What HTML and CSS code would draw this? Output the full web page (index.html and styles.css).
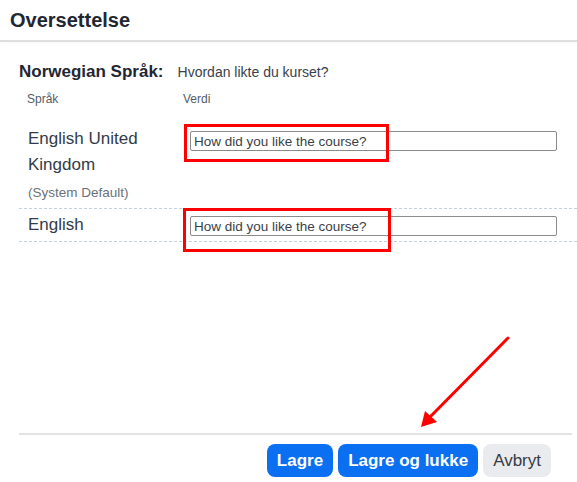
FILE: index.html
```html
<!DOCTYPE html>
<html lang="no">
<head>
<meta charset="utf-8">
<title>Oversettelse</title>
<link rel="stylesheet" href="styles.css">
</head>
<body>
  <header class="dialog-header">Oversettelse</header>

  <main class="dialog-body">
    <div class="lang-title">
      <span class="lang-name">Norwegian Språk:</span>
      <span class="lang-source">Hvordan likte du kurset?</span>
    </div>

    <div class="trans-table">
      <div class="trans-head">
        <span class="col-lang">Språk</span>
        <span class="col-value">Verdi</span>
      </div>

      <div class="trans-row">
        <div class="col-lang">
          <div class="lang-label">English United Kingdom</div>
          <div class="lang-note">(System Default)</div>
        </div>
        <div class="col-value">
          <div class="field">
            <input class="text-input" type="text" value="How did you like the course?">
            <span class="mark mark-first"></span>
          </div>
        </div>
      </div>

      <div class="trans-row">
        <div class="col-lang">
          <div class="lang-label">English</div>
        </div>
        <div class="col-value">
          <div class="field">
            <input class="text-input" type="text" value="How did you like the course?">
            <span class="mark mark-second"></span>
          </div>
        </div>
      </div>
    </div>
  </main>

  <footer class="dialog-footer">
    <button class="btn btn-primary">Lagre</button>
    <button class="btn btn-primary">Lagre og lukke</button>
    <button class="btn btn-secondary">Avbryt</button>
  </footer>

  <svg class="pointer-arrow" width="577" height="482" viewBox="0 0 577 482">
    <line x1="508" y1="338" x2="429" y2="418" stroke="#ff0000" stroke-width="3" stroke-linecap="round"/>
    <polygon points="421,427 425,411 437,422" fill="#ff0000"/>
  </svg>
</body>
</html>
```

FILE: styles.css
```css
html, body {
  margin: 0;
  padding: 0;
}

body {
  position: relative;
  height: 482px;
  display: flex;
  flex-direction: column;
  background: #ffffff;
  font-family: "Liberation Sans", Arial, sans-serif;
  color: #323a46;
  overflow: hidden;
}

.dialog-header {
  height: 40px;
  display: flex;
  align-items: center;
  padding-left: 10px;
  font-size: 20px;
  font-weight: bold;
  color: #1f2733;
  border-bottom: 2px solid #dedede;
  box-shadow: 0 1px 2px rgba(0, 0, 0, 0.04);
  flex-shrink: 0;
}

.dialog-body {
  flex: 1;
  padding-left: 19px;
}

.lang-title {
  display: flex;
  align-items: baseline;
  gap: 14px;
  margin-top: 20px;
  line-height: 20px;
}

.lang-name {
  font-size: 17px;
  font-weight: bold;
  color: #1f2733;
}

.lang-source {
  font-size: 14px;
  color: #3a414c;
}

.trans-head {
  display: flex;
  margin-top: 9px;
  font-size: 12px;
  line-height: 16px;
  color: #555c66;
}

.trans-head .col-lang {
  width: 156px;
  padding-left: 8px;
}

.trans-head .col-value {
  padding-left: 0;
}

.trans-row {
  display: flex;
  align-items: flex-start;
  border-bottom: 1px dashed #c3d0e0;
  padding: 3px 0;
}

.trans-head + .trans-row {
  margin-top: 16px;
}

.trans-row .col-lang {
  width: 155px;
  padding-left: 9px;
  flex-shrink: 0;
}

.lang-label {
  font-size: 17px;
  line-height: 26px;
  color: #333c48;
  width: 135px;
}

.lang-note {
  margin-top: 5px;
  margin-bottom: 2px;
  font-size: 13.5px;
  line-height: 20px;
  color: #6b717a;
}

.trans-row .col-value {
  flex: 1;
  padding: 5px 20px 0 7px;
}

.trans-row + .trans-row .col-value {
  padding-top: 4px;
}

.field {
  position: relative;
}

.text-input {
  display: block;
  box-sizing: border-box;
  width: 100%;
  height: 20px;
  margin: 0;
  padding: 0 3px;
  border: 1px solid #8b8b8b;
  border-radius: 2px;
  font-family: "Liberation Sans", Arial, sans-serif;
  font-size: 13.5px;
  color: #3a3f47;
  background: #ffffff;
}

.mark {
  position: absolute;
  box-sizing: border-box;
  border: 3px solid #ff0000;
  pointer-events: none;
}

.mark-first {
  left: -6px;
  top: -7px;
  width: 205px;
  height: 38px;
}

.mark-second {
  left: -7px;
  top: -8px;
  width: 208px;
  height: 44px;
}

.dialog-footer {
  display: flex;
  justify-content: flex-end;
  gap: 5px;
  margin: 0 5px 0 19px;
  padding: 9px 21px 5px 0;
  border-top: 2px solid #e3e3e3;
  flex-shrink: 0;
}

.btn {
  height: 33px;
  padding: 0 10px;
  border: none;
  border-radius: 8px;
  font-family: "Liberation Sans", Arial, sans-serif;
  font-size: 17px;
  line-height: 33px;
  cursor: pointer;
}

.btn-primary {
  background: #0b6ff2;
  color: #ffffff;
  font-weight: bold;
}

.btn-secondary {
  background: #e9ebee;
  color: #363c45;
}

.pointer-arrow {
  position: absolute;
  left: 0;
  top: 0;
  pointer-events: none;
}
```
